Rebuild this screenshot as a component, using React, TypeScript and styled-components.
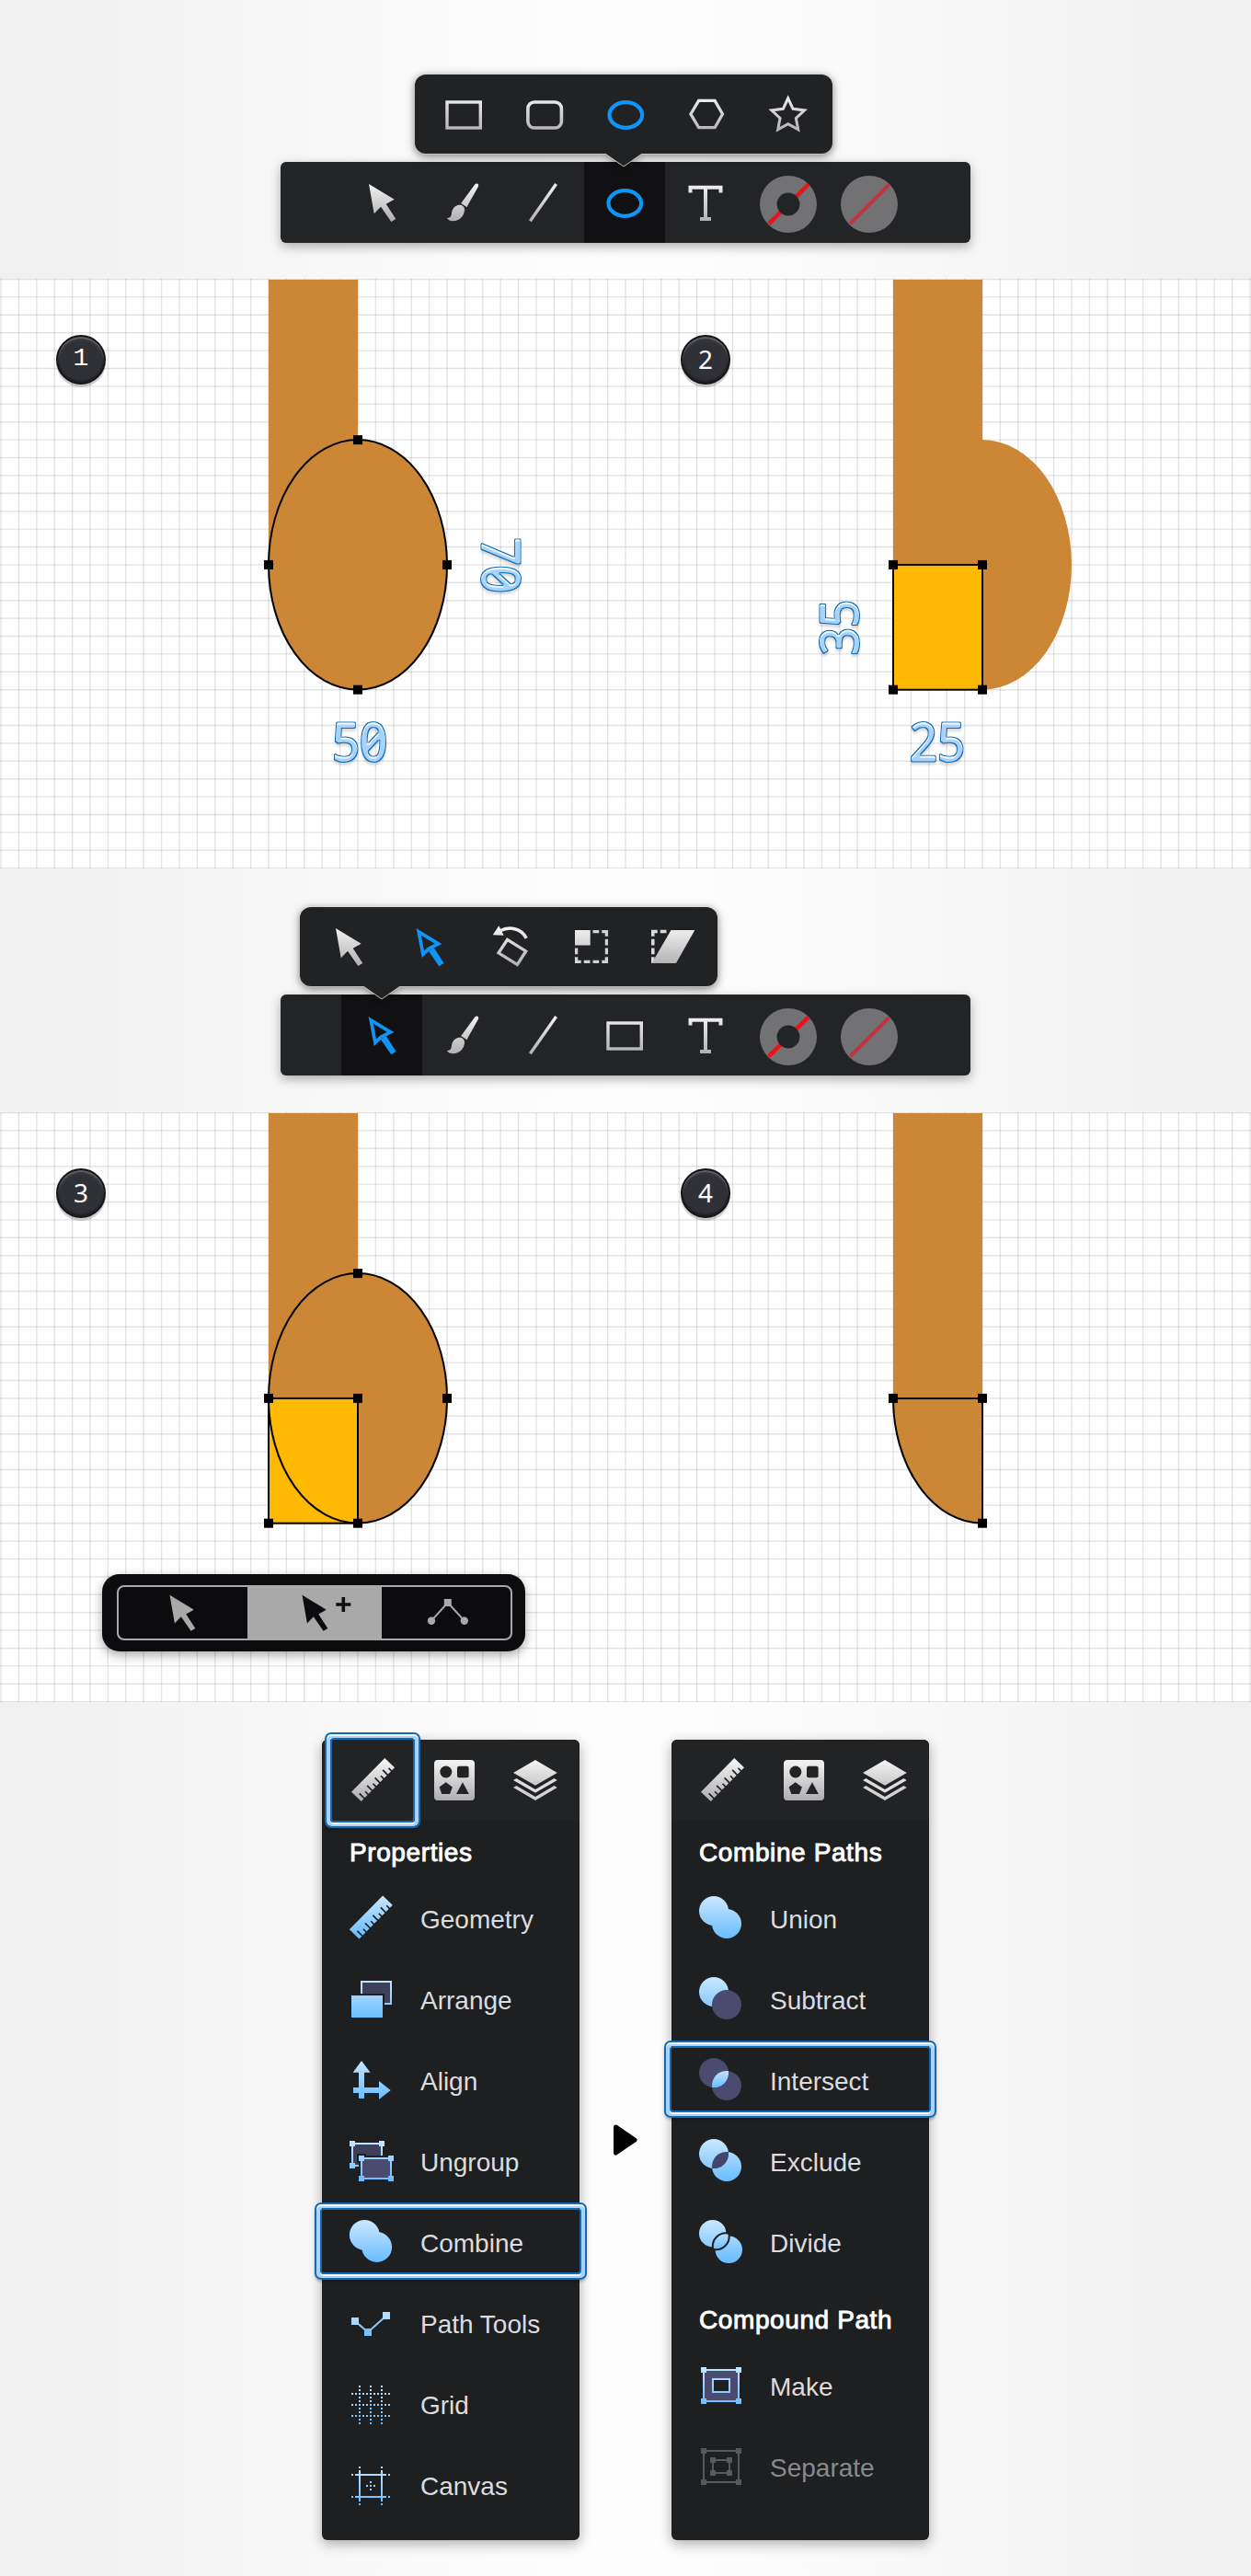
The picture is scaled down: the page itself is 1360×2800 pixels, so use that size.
import React from "react";
import styled, { createGlobalStyle } from "styled-components";

const GlobalStyle = createGlobalStyle`
  body {
    margin: 0;
    background: #fff;
    font-family: "Liberation Sans", Arial, sans-serif;
  }
  * { box-sizing: border-box; }
`;

const BACKDROP = "linear-gradient(90deg, #f0f0f0, #f6f6f6 20%, #fbfbfb 38%, #fdfdfd 50%, #fbfbfb 62%, #f6f6f6 80%, #f0f0f0)";

const Page = styled.main`
  width: 1360px;
  height: 2800px;
  overflow: hidden;
  display: flex;
  flex-direction: column;
  position: relative;
`;

const Band = styled.section<{ $height: number; $top: number }>`
  height: ${(p) => p.$height}px;
  padding: ${(p) => p.$top}px 0 0 305px;
  display: flex;
  flex-direction: column;
  gap: 9px;
  background: ${BACKDROP};
`;

const Popover = styled.div<{ $shift: number }>`
  position: relative;
  z-index: 2;
  width: 454px;
  height: 86px;
  margin-left: ${(p) => p.$shift}px;
  padding-left: 9px;
  display: flex;
  align-items: center;
  border-radius: 12px;
  background: #212224;
  filter: drop-shadow(0 1px 0 #c4c4c4) drop-shadow(0 2px 5px rgba(0, 0, 0, 0.5));
`;

const Pointer = styled.i<{ $x: number }>`
  position: absolute;
  top: 85.5px;
  left: ${(p) => p.$x - 20}px;
  width: 40px;
  height: 14px;
  background: #202123;
  clip-path: polygon(0 0, 100% 0, 50% 100%);
`;

const Toolbar = styled.div`
  width: 750px;
  height: 88px;
  padding-left: 66px;
  display: flex;
  border-radius: 6px;
  background: #222426;
  box-shadow: 0 4px 12px rgba(0, 0, 0, 0.32);
`;

const Tool = styled.div<{ $active?: boolean }>`
  width: 88px;
  height: 88px;
  flex: none;
  background: ${(p) => (p.$active ? "#111113" : "transparent")};
`;

const Glyph = styled.svg`
  display: block;
  flex: none;
  width: 88px;
  height: 88px;
  overflow: visible;
`;

const Canvas = styled.section`
  position: relative;
  height: 641px;
  background: #fff;
`;

const Artwork = styled.svg`
  display: block;
  width: 1360px;
  height: 641px;
`;

const Badge = styled.span<{ $x: number; $footed?: boolean }>`
  position: absolute;
  left: ${(p) => p.$x}px;
  top: 61px;
  width: 54px;
  height: 54px;
  display: flex;
  align-items: center;
  justify-content: center;
  border-radius: 50%;
  border: 2px solid #141518;
  background: radial-gradient(circle at 50% 60%, #303136 60%, #46474c 100%);
  box-shadow: inset 0 2px 1px rgba(255, 255, 255, 0.22), inset 0 -2px 2px rgba(0, 0, 0, 0.4), 0 3px 1px rgba(0, 0, 0, 0.2);
  color: #fff;
  font: ${(p) => (p.$footed ? '28px/50px "Liberation Mono", monospace' : '28px/50px "Noto Sans", sans-serif')};
  padding-bottom: 2px;
`;

const ModeBar = styled.div`
  position: absolute;
  left: 111px;
  top: 502px;
  width: 460px;
  height: 84px;
  padding: 12px 15px 12px 16px;
  border-radius: 19px;
  background: #0c0c0e;
  box-shadow: 0 4px 12px rgba(0, 0, 0, 0.35);
`;

const ModeGroup = styled.div`
  display: flex;
  height: 60px;
  width: 430px;
  border: 2px solid #a9a9a9;
  border-radius: 8px;
`;

const Mode = styled.div<{ $active?: boolean }>`
  flex: 0 0 ${(p) => (p.$active ? 146 : 140)}px;
  height: 56px;
  background: ${(p) => (p.$active ? "#a9a9a9" : "transparent")};
`;

const ModeGlyph = styled.svg`
  display: block;
  width: 140px;
  height: 56px;
`;

const Panels = styled.section`
  height: 950px;
  padding-top: 41px;
  display: flex;
  justify-content: center;
  align-items: flex-start;
  background: ${BACKDROP};
`;

const Panel = styled.div`
  width: 280px;
  height: 870px;
  border-radius: 6px;
  background: #1e1f21;
  box-shadow: 0 4px 14px rgba(0, 0, 0, 0.32);
`;

const Tabs = styled.div`
  height: 88px;
  padding-left: 12px;
  display: flex;
  border-radius: 6px 6px 0 0;
  background: #222325;
`;

const Tab = styled.div`
  position: relative;
  width: 88px;
  height: 88px;
`;

const Heading = styled.h2<{ $height: number; $drop: number }>`
  margin: 0;
  height: ${(p) => p.$height}px;
  padding: ${(p) => p.$drop}px 0 0 30px;
  display: flex;
  align-items: center;
  color: #fff;
  font-size: 28px;
  font-weight: 400;
  letter-spacing: 0.6px;
  -webkit-text-stroke: 0.9px #fff;
`;

const Row = styled.div<{ $muted?: boolean }>`
  position: relative;
  height: 88px;
  padding-left: 12px;
  display: flex;
  align-items: center;
  gap: 7px;
  color: ${(p) => (p.$muted ? "#88898b" : "#dcdcde")};
  font-size: 28px;
`;

const Label = styled.span`
  padding-top: 2px;
`;

const Focus = styled.i<{ $x: number; $y: number; $w: number; $h: number }>`
  position: absolute;
  left: ${(p) => p.$x}px;
  top: ${(p) => p.$y}px;
  width: ${(p) => p.$w}px;
  height: ${(p) => p.$h}px;
  border-radius: 7px;
  border: 2px solid #126bb2;
  box-shadow: inset 0 2px 0 #f4faff, inset 0 0 0 4px #abd2fb, 0 2px 3px rgba(0, 0, 0, 0.25);
  &::after {
    content: "";
    position: absolute;
    inset: 4px;
    border: 2px solid #126bb2;
    border-radius: 4px;
    box-shadow: 0 2px 0 #f4faff;
  }
`;

const Between = styled.div`
  width: 100px;
  height: 870px;
  display: flex;
  align-items: center;
  justify-content: center;
`;

const Shared = styled.svg`
  position: absolute;
  width: 0;
  height: 0;
`;

const SILVER = "url(#silver)";
const SKY = "url(#sky)";
const BLUE = "#0f95f5";
const PLUM = "#4a4b6e";
const DARK = "#1e1f21";

const Gradients = () => (
  <Shared>
    <defs>
      <linearGradient id="silver" gradientUnits="userSpaceOnUse" x1="0" x2="0" y1="22" y2="66">
        <stop offset="0" stopColor="#f4f4f5" />
        <stop offset="1" stopColor="#aeaeb0" />
      </linearGradient>
      <linearGradient id="sky" gradientUnits="userSpaceOnUse" x1="0" x2="0" y1="20" y2="65">
        <stop offset="0" stopColor="#c9e7ff" />
        <stop offset="1" stopColor="#68bcff" />
      </linearGradient>
      <linearGradient id="skyLens" gradientUnits="userSpaceOnUse" x1="0" x2="0" y1="32" y2="51">
        <stop offset="0" stopColor="#c4e4ff" />
        <stop offset="1" stopColor="#6cbdff" />
      </linearGradient>
      <filter id="bevel" x="-20%" y="-20%" width="140%" height="150%" colorInterpolationFilters="sRGB">
        <feMorphology in="SourceAlpha" operator="erode" radius="1" result="core" />
        <feOffset in="core" dy="2" result="coreLow" />
        <feComposite in="core" in2="coreLow" operator="out" result="lip" />
        <feFlood floodColor="#0f6cb4" result="edgeColor" />
        <feComposite in="edgeColor" in2="SourceAlpha" operator="in" result="edge" />
        <feFlood floodColor="#a9d2fa" result="bodyColor" />
        <feComposite in="bodyColor" in2="core" operator="in" result="body" />
        <feFlood floodColor="#f1f8ff" result="lipColor" />
        <feComposite in="lipColor" in2="lip" operator="in" result="shine" />
        <feOffset in="SourceAlpha" dy="3" result="low" />
        <feFlood floodColor="#000" floodOpacity="0.14" result="shadeColor" />
        <feComposite in="shadeColor" in2="low" operator="in" result="shade0" />
        <feGaussianBlur in="shade0" stdDeviation="0.8" result="shade" />
        <feMerge>
          <feMergeNode in="shade" />
          <feMergeNode in="edge" />
          <feMergeNode in="body" />
          <feMergeNode in="shine" />
        </feMerge>
      </filter>
    </defs>
  </Shared>
);

const ARROW = "30,24 57.7,40.7 48.7,45.7 59.3,62 54.3,65 43,48.7 35.7,56.3";

const ArrowIcon = () => (
  <Glyph><polygon points={ARROW} fill={SILVER} /></Glyph>
);
const NodeArrowIcon = () => (
  <Glyph>
    <path d="M32.2 27.8L53.6 40.9L43.4 46.1L36.9 52.4Z" fill="none" stroke={BLUE} strokeWidth="3.7" />
    <polygon points="48.9,45.2 59.6,62 54.3,65.2 42.8,48.6" fill={BLUE} />
  </Glyph>
);
const BrushIcon = () => (
  <Glyph>
    <path d="M57.2 24.6Q58.8 22.8 60.4 23.8Q61.8 25 60.7 27.2L50 46.3L48.6 49.2L42.2 44.9L44.2 42.3Z" fill={SILVER} />
    <path d="M40 46.8C43.8 46.3 46.3 49 46 52.5C45.6 59 40.5 64.3 33.5 64.3C30.5 64.3 28 63 26.8 61C30 61 31.3 59.5 31.8 57C32.3 52 34.5 47.5 40 46.8Z" fill={SILVER} />
  </Glyph>
);
const LineIcon = () => (
  <Glyph><path d="M57.6 24L29.4 64.3" stroke={SILVER} strokeWidth="3.4" /></Glyph>
);
const EllipseIcon = () => (
  <Glyph><ellipse cx="44.3" cy="45" rx="17.8" ry="13.8" fill="none" stroke={BLUE} strokeWidth="4.2" /></Glyph>
);
const RectIcon = () => (
  <Glyph><rect x="26" y="31" width="36.3" height="28" fill="none" stroke={SILVER} strokeWidth="3.4" /></Glyph>
);
const RoundRectIcon = () => (
  <Glyph><rect x="25.9" y="31" width="36.5" height="28" rx="7" fill="none" stroke={SILVER} strokeWidth="3.6" /></Glyph>
);
const HexagonIcon = () => (
  <Glyph><polygon points="26.9,44 35.6,29.4 53.1,29.4 61.5,44 53.1,58.7 35.6,58.7" fill="none" stroke={SILVER} strokeWidth="3.3" /></Glyph>
);
const starPoints = Array.from({ length: 10 }, (_, i) => {
  const r = i % 2 ? 9.1 : 18.8;
  const a = (Math.PI * i) / 5;
  return `${(44.7 + r * Math.sin(a)).toFixed(2)},${(45.7 - r * Math.cos(a)).toFixed(2)}`;
}).join(" ");
const StarIcon = () => (
  <Glyph><polygon points={starPoints} fill="none" stroke={SILVER} strokeWidth="3" strokeMiterlimit="6" /></Glyph>
);
const TypeIcon = () => (
  <Glyph>
    <path d="M27.5 33.5V27.7H60.5V33.5M44 27.7V62M38 62H50" fill="none" stroke={SILVER} strokeWidth="4" />
  </Glyph>
);
const RotateIcon = () => (
  <Glyph>
    <polygon points="24.7,31.2 31.3,21.3 36.7,31.7" fill={SILVER} />
    <path d="M32.5 26.8C43 21.5 55.5 24 61.3 34.8" fill="none" stroke={SILVER} strokeWidth="3.5" />
    <polygon points="40.6,36.3 60.7,48.9 51.4,63.4 31,50.8" fill="none" stroke={SILVER} strokeWidth="3.3" />
  </Glyph>
);
const ScaleIcon = () => (
  <Glyph>
    <rect x="26" y="26" width="16.7" height="16.5" fill={SILVER} />
    <path d="M45.5 27.6H62M60.4 26V62M26 60.4H62M27.6 45.5V62" stroke="#d2d2d4" strokeWidth="3.3" strokeDasharray="6.7 3.07" />
  </Glyph>
);
const SkewIcon = () => (
  <Glyph>
    <path d="M21 27.6H38M22.8 26V62" stroke="#dcdcde" strokeWidth="3.5" strokeDasharray="6.7 3.07" />
    <polygon points="42.5,26 68.3,26 48,62 21.5,62" fill={SILVER} />
  </Glyph>
);
const StrokeSwatch = () => (
  <Glyph>
    <circle cx="46" cy="46" r="31" fill="#727274" />
    <path d="M68 24.4L24.7 67.4" stroke="#e8141a" strokeWidth="4.6" />
    <circle cx="46" cy="46" r="12.4" fill="#222426" />
  </Glyph>
);
const FillSwatch = () => (
  <Glyph>
    <circle cx="46" cy="46" r="31" fill="#727274" />
    <path d="M67.7 24.7L25 67.3" stroke="#c53338" strokeWidth="3.8" />
  </Glyph>
);

const ticks = [-21, -15, -9, -3, 3, 9, 15, 21];
const Ruler = ({ fill, dx = 0, dy = 0 }: { fill: string; dx?: number; dy?: number }) => (
  <Glyph>
    <g transform={`translate(${dx} ${dy})`}>
      <polygon points="56.3,20 67,30.3 30.7,67 20,56.7" fill={fill} />
      <g transform="rotate(-45 43.5 43.5)" stroke={DARK} strokeWidth="1.7">
        {ticks.map((t, i) => (
          <path key={t} d={`M${43.5 + t} 51.5V${i % 2 ? 46.5 : 43.5}`} />
        ))}
      </g>
    </g>
  </Glyph>
);
const ShapesIcon = () => (
  <Glyph>
    <rect x="22" y="22" width="44" height="44" rx="4" fill={SILVER} />
    <g fill="#222325">
      <circle cx="34.8" cy="35" r="6.5" />
      <rect x="47" y="28.7" width="12.6" height="12.6" rx="2" />
      <polygon points="34.7,46.2 41.9,51.4 39.1,59 30.3,59 27.6,51.4" />
      <polygon points="53,46.2 59.8,59 46,59" />
    </g>
  </Glyph>
);
const LayersIcon = () => (
  <Glyph>
    <polygon points="44,22 67.8,36 44,49.8 20,36" fill={SILVER} />
    <polygon points="20,44 23.4,42 44,54 64.4,42 67.8,44 44,57.8" fill="#dededf" />
    <polygon points="20,52 23.4,50 44,62 64.4,50 67.8,52 44,66" fill="#d2d2d4" />
  </Glyph>
);

const Squares = ({ at, size = 6, fill = SKY }: { at: number[][]; size?: number; fill?: string }) => (
  <>
    {at.map(([x, y]) => (
      <rect key={`${x}-${y}`} x={x - size / 2} y={y - size / 2} width={size} height={size} fill={fill} />
    ))}
  </>
);
const ArrangeIcon = () => (
  <Glyph>
    <rect x="31" y="24" width="32" height="24" fill="#3f405a" stroke={SKY} strokeWidth="2" />
    <rect x="18" y="37" width="38" height="28" fill={DARK} />
    <rect x="20" y="39" width="34" height="24" fill={SKY} />
  </Glyph>
);
const AlignIcon = () => (
  <Glyph>
    <path d="M31 22L40.6 34.7H34V51H50V44L62.7 54L50 64V57H34V63H28V57H22V51H28V34.7H21.6Z" fill={SKY} />
  </Glyph>
);
const UngroupIcon = () => (
  <Glyph>
    <rect x="21" y="24" width="32" height="24" fill="#3f405a" stroke={SKY} strokeWidth="2" />
    <Squares at={[[21, 24], [53, 24], [21, 48]]} />
    <path d="M26 35H36V37H68V68H28V45H26Z" fill={DARK} />
    <rect x="31" y="40" width="32" height="22" fill={PLUM} stroke={SKY} strokeWidth="2" />
    <Squares at={[[31, 40], [63, 40], [31, 62], [63, 62]]} />
  </Glyph>
);
const CombineIcon = () => (
  <Glyph>
    <circle cx="34.3" cy="35.3" r="16.4" fill={SKY} />
    <circle cx="47.7" cy="48.5" r="16.4" fill={SKY} />
  </Glyph>
);
const PathIcon = () => (
  <Glyph>
    <path d="M24 41L38 53L58 35" fill="none" stroke="#8ecbfd" strokeWidth="2" />
    <Squares at={[[24, 41]]} size={8} fill="#a9d8ff" />
    <Squares at={[[38, 53]]} size={8} fill="#77c1fd" />
    <Squares at={[[58, 35]]} size={8} fill="#b6ddff" />
  </Glyph>
);
const GridIcon = () => (
  <Glyph>
    <path d="M20 32H62M20 44H62M20 56H62M29 23V65M41 23V65M53 23V65" fill="none" stroke={SKY} strokeWidth="2" strokeDasharray="2 2" />
  </Glyph>
);
const CanvasIcon = () => (
  <Glyph>
    <path
      d="M29 27V61M53 27V61M24 32H58M24 56H58M29 23V25M53 23V25M29 63V65M53 63V65M20 32H22M60 32H62M20 56H22M60 56H62M40 40H42M40 44H42M40 48H42M36 44H38M44 44H46"
      fill="none"
      stroke={SKY}
      strokeWidth="2"
    />
  </Glyph>
);

type BoolKind = "union" | "subtract" | "intersect" | "exclude";
const BooleanIcon = ({ kind }: { kind: BoolKind }) => (
  <Glyph>
    <circle cx="34" cy="35" r="16" fill={kind === "intersect" ? PLUM : SKY} />
    <circle cx="48" cy="49" r="16" fill={kind === "intersect" || kind === "subtract" ? PLUM : SKY} />
    {(kind === "intersect" || kind === "exclude") && (
      <path d="M49.94 33.06A16 16 0 0 1 32.06 50.94A16 16 0 0 1 49.94 33.06Z" fill={kind === "intersect" ? "url(#skyLens)" : "#45466a"} />
    )}
  </Glyph>
);
const DivideIcon = () => (
  <Glyph>
    <circle cx="32.7" cy="33.7" r="14.7" fill={SKY} />
    <circle cx="50.3" cy="51.3" r="14.7" fill={SKY} />
    <path d="M48.9 35.1A12.6 12.6 0 0 1 34.6 49.4A12.6 12.6 0 0 1 48.9 35.1Z" fill={DARK} stroke={DARK} strokeWidth="5.4" strokeLinejoin="round" />
    <path d="M48.9 35.1A12.6 12.6 0 0 1 34.6 49.4A12.6 12.6 0 0 1 48.9 35.1Z" fill="url(#skyLens)" stroke="url(#skyLens)" strokeWidth="1.4" strokeLinejoin="round" />
  </Glyph>
);
const MakeIcon = () => (
  <Glyph>
    <rect x="23" y="26" width="38" height="34" fill={PLUM} stroke={SKY} strokeWidth="2" />
    <Squares at={[[23, 26], [61, 26], [23, 60], [61, 60]]} />
    <rect x="33" y="36" width="18" height="14" fill={DARK} stroke={SKY} strokeWidth="2" />
  </Glyph>
);
const SeparateIcon = () => (
  <Glyph>
    <rect x="23" y="26" width="38" height="34" fill="none" stroke="#58595b" strokeWidth="2" />
    <rect x="33" y="36" width="18" height="14" fill="none" stroke="#58595b" strokeWidth="2" />
    <Squares
      at={[[23, 26], [61, 26], [23, 60], [61, 60], [33, 36], [51, 36], [33, 50], [51, 50]]}
      fill="#58595b"
    />
  </Glyph>
);

const px = (u: number) => 1 + 0.97 * u;
const py = (v: number) => 0.5 + 0.97 * v;

const GridLines = () => (
  <g stroke="#000" strokeOpacity="0.11" strokeWidth="1.4">
    {Array.from({ length: 71 }, (_, i) => (
      <path key={`v${i}`} d={`M${px(i * 20)} 0V641`} />
    ))}
    {Array.from({ length: 34 }, (_, i) => (
      <path key={`h${i}`} d={`M0 ${py(i * 20)}H1360`} />
    ))}
  </g>
);

const BROWN = "#cb8735";
const Post = ({ u, bottom }: { u: number; bottom: number }) => (
  <rect x={px(u)} y="1" width="97" height={py(bottom) - 1} fill={BROWN} />
);
const Handles = ({ at }: { at: number[][] }) => (
  <>
    {at.map(([u, v]) => (
      <rect key={`${u}-${v}`} x={px(u) - 5} y={py(v) - 5} width="10" height="10" fill="#000" />
    ))}
  </>
);
const Measure = ({ x, y, turn = 0, children }: { x: number; y: number; turn?: number; children: string }) => (
  <g filter="url(#bevel)">
    <text
      transform={`translate(${x} ${y}) rotate(${turn}) scale(0.94 1)`}
      y="20"
      textAnchor="middle"
      fontFamily='"Noto Sans", sans-serif'
      fontSize="56"
      fontWeight="400"
      stroke="#000"
      strokeWidth="3"
      strokeLinejoin="round"
      style={{ fontFeatureSettings: '"zero"' }}
    >
      {children}
    </text>
  </g>
);

const FirstCanvas = () => (
  <Canvas>
    <Artwork>
      <GridLines />
      <Post u={300} bottom={320} />
      <ellipse cx={px(400)} cy={py(320)} rx="97" ry="135.8" fill={BROWN} stroke="#000" strokeWidth="2" />
      <Handles at={[[400, 180], [300, 320], [500, 320], [400, 460]]} />
      <Post u={1000} bottom={320} />
      <path d={`M${px(1100)} ${py(180)}a97 135.8 0 0 1 0 271.6Z`} fill={BROWN} />
      <rect x={px(1000)} y={py(320)} width="97" height="135.8" fill="#ffb902" stroke="#000" strokeWidth="2" />
      <Handles at={[[1000, 320], [1100, 320], [1000, 460], [1100, 460]]} />
      <Measure x={544.5} y={311.5} turn={90}>70</Measure>
      <Measure x={391} y={504}>50</Measure>
      <Measure x={913} y={379} turn={-90}>35</Measure>
      <Measure x={1019} y={504}>25</Measure>
    </Artwork>
    <Badge $x={61} $footed>1</Badge>
    <Badge $x={740}>2</Badge>
  </Canvas>
);

const SecondCanvas = () => (
  <Canvas>
    <Artwork>
      <GridLines />
      <Post u={300} bottom={320} />
      <ellipse cx={px(400)} cy={py(320)} rx="97" ry="135.8" fill={BROWN} />
      <rect x={px(300)} y={py(320)} width="97" height="135.8" fill="#ffb902" stroke="#000" strokeWidth="2" />
      <ellipse cx={px(400)} cy={py(320)} rx="97" ry="135.8" fill="none" stroke="#000" strokeWidth="2" />
      <Handles at={[[400, 180], [300, 320], [400, 320], [500, 320], [300, 460], [400, 460]]} />
      <Post u={1000} bottom={320} />
      <path d={`M${px(1000)} ${py(320)}H${px(1100)}V${py(460)}A97 135.8 0 0 1 ${px(1000)} ${py(320)}Z`} fill={BROWN} stroke="#000" strokeWidth="2" />
      <Handles at={[[1000, 320], [1100, 320], [1100, 460]]} />
    </Artwork>
    <Badge $x={61}>3</Badge>
    <Badge $x={740}>4</Badge>
    <ModeBar>
      <ModeGroup>
        <Mode>
          <ModeGlyph><polygon points={ARROW} transform="translate(27 -14) scale(0.95)" fill="#a9a9a9" /></ModeGlyph>
        </Mode>
        <Mode $active>
          <ModeGlyph>
            <polygon points={ARROW} transform="translate(31 -14) scale(0.95)" fill="#0c0c0e" />
            <path d="M96.3 19H112.3M104.3 11V27" stroke="#0c0c0e" strokeWidth="3.6" />
          </ModeGlyph>
        </Mode>
        <Mode>
          <ModeGlyph>
            <path d="M54 36.7L71.8 17L89.8 36.7" fill="none" stroke="#a9a9a9" strokeWidth="2" />
            <rect x="67.8" y="13" width="8" height="8" fill="#a9a9a9" />
            <circle cx="54" cy="36.7" r="4.2" fill="#a9a9a9" />
            <circle cx="89.8" cy="36.7" r="4.2" fill="#a9a9a9" />
          </ModeGlyph>
        </Mode>
      </ModeGroup>
    </ModeBar>
  </Canvas>
);

type Item = { label: string; icon: React.ReactNode; focus?: boolean; muted?: boolean };

const properties: Item[] = [
  { label: "Geometry", icon: <Ruler fill={SKY} dx={-2.2} dy={-1.5} /> },
  { label: "Arrange", icon: <ArrangeIcon /> },
  { label: "Align", icon: <AlignIcon /> },
  { label: "Ungroup", icon: <UngroupIcon /> },
  { label: "Combine", icon: <CombineIcon />, focus: true },
  { label: "Path Tools", icon: <PathIcon /> },
  { label: "Grid", icon: <GridIcon /> },
  { label: "Canvas", icon: <CanvasIcon /> },
];
const combine: Item[] = [
  { label: "Union", icon: <BooleanIcon kind="union" /> },
  { label: "Subtract", icon: <BooleanIcon kind="subtract" /> },
  { label: "Intersect", icon: <BooleanIcon kind="intersect" />, focus: true },
  { label: "Exclude", icon: <BooleanIcon kind="exclude" /> },
  { label: "Divide", icon: <DivideIcon /> },
];
const compound: Item[] = [
  { label: "Make", icon: <MakeIcon /> },
  { label: "Separate", icon: <SeparateIcon />, muted: true },
];

const Rows = ({ items }: { items: Item[] }) => (
  <>
    {items.map((item) => (
      <Row key={item.label} $muted={item.muted}>
        {item.icon}
        <Label>{item.label}</Label>
        {item.focus && <Focus $x={-8} $y={0} $w={296} $h={84} />}
      </Row>
    ))}
  </>
);

const PanelTabs = ({ focus }: { focus?: boolean }) => (
  <Tabs>
    <Tab>
      <Ruler fill={SILVER} />
      {focus && <Focus $x={-9} $y={-8} $w={104} $h={104} />}
    </Tab>
    <Tab><ShapesIcon /></Tab>
    <Tab><LayersIcon /></Tab>
  </Tabs>
);

export default function App() {
  return (
    <Page>
      <GlobalStyle />
      <Gradients />
      <Band $height={303} $top={81}>
        <Popover $shift={146}>
          <RectIcon />
          <RoundRectIcon />
          <EllipseIcon />
          <HexagonIcon />
          <StarIcon />
          <Pointer $x={227} />
        </Popover>
        <Toolbar>
          <Tool><ArrowIcon /></Tool>
          <Tool><BrushIcon /></Tool>
          <Tool><LineIcon /></Tool>
          <Tool $active><EllipseIcon /></Tool>
          <Tool><TypeIcon /></Tool>
          <Tool><StrokeSwatch /></Tool>
          <Tool><FillSwatch /></Tool>
        </Toolbar>
      </Band>
      <FirstCanvas />
      <Band $height={265} $top={42}>
        <Popover $shift={21}>
          <ArrowIcon />
          <NodeArrowIcon />
          <RotateIcon />
          <ScaleIcon />
          <SkewIcon />
          <Pointer $x={89} />
        </Popover>
        <Toolbar>
          <Tool $active><NodeArrowIcon /></Tool>
          <Tool><BrushIcon /></Tool>
          <Tool><LineIcon /></Tool>
          <Tool><RectIcon /></Tool>
          <Tool><TypeIcon /></Tool>
          <Tool><StrokeSwatch /></Tool>
          <Tool><FillSwatch /></Tool>
        </Toolbar>
      </Band>
      <SecondCanvas />
      <Panels>
        <Panel>
          <PanelTabs focus />
          <Heading $height={63} $drop={6}>Properties</Heading>
          <Rows items={properties} />
        </Panel>
        <Between>
          <svg width="28" height="36" viewBox="0 0 28 36">
            <path d="M3.5 4L24 18L3.5 32Z" stroke="#000" strokeWidth="5" strokeLinejoin="round" />
          </svg>
        </Between>
        <Panel>
          <PanelTabs />
          <Heading $height={63} $drop={6}>Combine Paths</Heading>
          <Rows items={combine} />
          <Heading $height={68} $drop={11}>Compound Path</Heading>
          <Rows items={compound} />
        </Panel>
      </Panels>
    </Page>
  );
}
